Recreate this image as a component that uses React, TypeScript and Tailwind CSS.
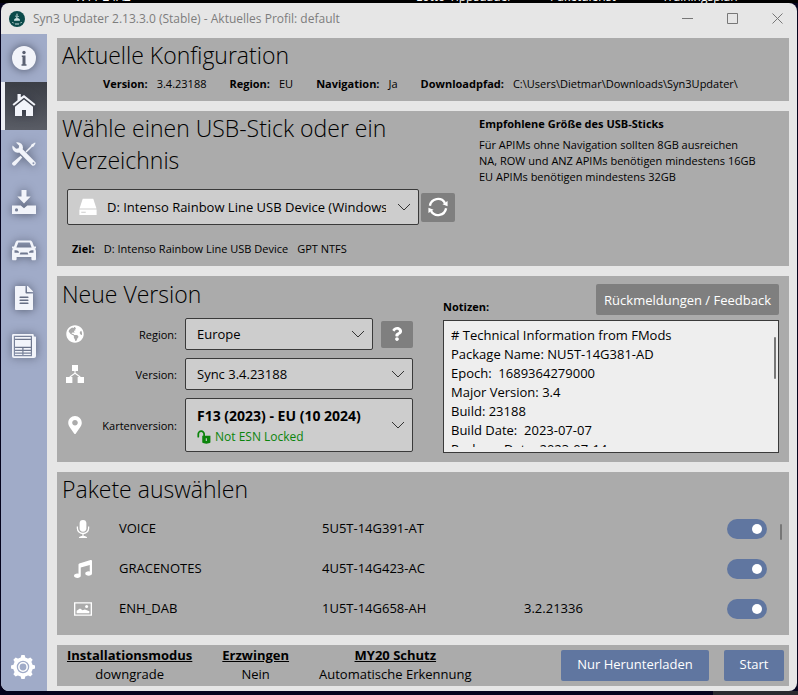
import { useState } from 'react';
import type { ReactNode } from 'react';
import {
  FaFileAlt,
  FaGlobeAmericas,
  FaMapMarkerAlt,
  FaMusic,
  FaQuestion,
} from 'react-icons/fa';

/* ---------- Icons ---------- */
type IconProps = { className?: string };

function Svg({ className, children }: IconProps & { children: ReactNode }) {
  return (
    <svg viewBox="0 0 24 24" fill="currentColor" className={className} aria-hidden="true">
      {children}
    </svg>
  );
}

const LogoIcon = ({ className }: IconProps) => (
  <Svg className={className}>
    <circle cx="12" cy="12" r="12" fill="#0b4a4a" />
    <path d="M12 4v5M9.500 7.500L12 10l2.500-2.500" stroke="#dfeeee" strokeWidth="1.400" fill="none" />
    <path d="M7.500 14.500a4.500 4 0 0 1 9 0z" fill="#cfe3e3" />
    <path d="M5 16.500l2 2M19 16.500l-2 2M9 19.500h6" stroke="#cfe3e3" strokeWidth="1.500" fill="none" />
  </Svg>
);

const InfoIcon = ({ className }: IconProps) => (
  <Svg className={className}>
    <circle cx="12" cy="12" r="12" />
    <g fill="#5b6172">
      <circle cx="12" cy="6.500" r="1.700" />
      <path d="M9.800 9.500h3.700v8.700h1v1.500h-5v-1.500h1V11h-.7z" />
    </g>
  </Svg>
);

const HomeIcon = ({ className }: IconProps) => (
  <Svg className={className}>
    <path d="M5.500 0h3.300v3.200L12 1l11.500 9.300-1.300 1.500L12 3.700 1.800 11.800.5 10.300l5-4z" />
    <path d="M12 5.600l9 7.100V22h-7v-6h-4v6H3v-9.300z" />
  </Svg>
);

const ToolsIcon = ({ className }: IconProps) => (
  <Svg className={className}>
    <path
      fillRule="evenodd"
      d="M4 .5l3.200 3.200-.6 2.500-2.500.6L.6 3.600a5.400 5.400 0 0 0 6.600 6.900L19.600 23a2.300 2.300 0 0 0 3.400-3.300L10.700 7.200A5.400 5.400 0 0 0 4 .5zM21.200 20.300a1 1 0 1 1-.1 1.900 1 1 0 0 1 .1-1.900z"
    />
    <path d="M23 .5l-3.600 2-.7 1.800-5.200 5.200 1 1 5.300-5.200 1.800-.7L23.600 1zM8.600 13.800l1.700 1.600-6.700 7.700a2 2 0 0 1-2.900 0 2 2 0 0 1 .1-2.900z" />
  </Svg>
);

const DownloadIcon = ({ className }: IconProps) => (
  <Svg className={className}>
    <path d="M9.500 0h5v6.500h4.200L12 13.600 5.300 6.500h4.200z" />
    <path
      fillRule="evenodd"
      d="M0 15.500h8.700L12 18.200l3.300-2.700H24V24H0zm4.500 2.800a1.600 1.600 0 1 0 0 3.200 1.600 1.600 0 0 0 0-3.200z"
    />
  </Svg>
);

const CarIcon = ({ className }: IconProps) => (
  <Svg className={className}>
    <path
      fillRule="evenodd"
      d="M6 2.500h12c1.200 0 1.900.5 2.300 1.600L22 8.600h2v2h-1.300c.8.8 1.300 1.700 1.300 3V21c0 .8-.5 1.300-1.300 1.300h-2c-.8 0-1.300-.5-1.300-1.300v-2H4.600v2c0 .8-.5 1.300-1.300 1.300h-2C.5 22.300 0 21.800 0 21v-7.400c0-1.300.5-2.200 1.300-3H0v-2h2l1.700-4.500C4.100 3 4.800 2.500 6 2.500zm.3 2L4.400 9.500h15.200l-1.900-5zM2.500 12.300v2.400H7c0-1.500-1.200-2.400-3-2.400zm19 0H20c-1.800 0-3 .9-3 2.400h4.500zM8.500 14.600l-.8 2h8.600l-.8-2z"
    />
  </Svg>
);

const NewsIcon = ({ className }: IconProps) => (
  <Svg className={className}>
    <path
      fillRule="evenodd"
      d="M1.500 0h19c.8 0 1.300.5 1.300 1.300V2.500H23c.6 0 1 .4 1 1V22c0 1.200-.8 2-2 2H2c-1.200 0-2-.8-2-2V1.500C0 .5.500 0 1.500 0zM1.800 1.800v20.400h18.200V1.800z"
    />
    <path d="M3 3h15.800v1.800H3zM3 6h15.800v6.800H3zM3 14h7.300v1.800H3zM11.500 14h7.300v1.800h-7.300zM3 17h7.300v1.500H3zM11.500 17h7.300v1.500h-7.300zM3 19.700h7.300V21H3zM11.500 19.700h7.300V21h-7.300z" />
  </Svg>
);

const GearIcon = ({ className }: IconProps) => (
  <Svg className={className}>
    {[0, 45, 90, 135].map((angle) => (
      <path
        key={angle}
        d="M10.400 0h3.200l1.200 4v16l-1.200 4h-3.200l-1.200-4V4z"
        transform={`rotate(${angle} 12 12)`}
      />
    ))}
    <circle cx="12" cy="12" r="9.800" />
    <circle cx="12" cy="12" r="5.600" fill="none" stroke="#a0abc8" strokeWidth="1.300" />
    <circle cx="12" cy="12" r="3.400" fill="#a0abc8" />
  </Svg>
);

const DriveIcon = ({ className }: IconProps) => (
  <Svg className={className}>
    <path d="M5 1h14l4.300 13H.7z" />
    <path fillRule="evenodd" d="M.5 15.200h23v7.300H.5zM3 18.400v1.200h6v-1.200z" />
  </Svg>
);

const RefreshIcon = ({ className }: IconProps) => (
  <Svg className={className}>
    <path
      d="M2.300 10.500a9.800 9.800 0 0 1 18-3.500M21.700 13.500a9.800 9.800 0 0 1-18 3.500"
      fill="none"
      stroke="currentColor"
      strokeWidth="2.800"
    />
    <path d="M23.500 4.800v6.400l-6.200-2.400zM.5 19.200v-6.400l6.200 2.400z" />
  </Svg>
);

const SitemapIcon = ({ className }: IconProps) => (
  <Svg className={className}>
    <path d="M8 0h8v8H8zM0 16h8.500v8H0zM15.500 16H24v8h-8.500z" />
    <path d="M12 8v3l-7 5M12 11l7 5" fill="none" stroke="currentColor" strokeWidth="1.500" />
  </Svg>
);

const UnlockIcon = ({ className }: IconProps) => (
  <Svg className={className}>
    <path
      d="M2.200 11.500V7a5 5 0 0 1 10 0v4"
      fill="none"
      stroke="currentColor"
      strokeWidth="3"
      strokeLinecap="round"
    />
    <path fillRule="evenodd" d="M9 10h14v11.500C20 24 12 24 9 21.500zM15 14v5h2v-5z" />
  </Svg>
);

const MicIcon = ({ className }: IconProps) => (
  <Svg className={className}>
    <rect x="7.500" y="0" width="9" height="15.500" rx="4.500" />
    <path
      d="M4.500 8.500v2.500a7.500 7 0 0 0 15 0V8.500M12 18v4"
      fill="none"
      stroke="currentColor"
      strokeWidth="1.700"
    />
    <path d="M6.500 24c0-2.200 2.500-2.800 5.500-2.800s5.500.6 5.500 2.800z" />
  </Svg>
);

const PictureIcon = ({ className }: IconProps) => (
  <Svg className={className}>
    <path fillRule="evenodd" d="M0 3h24v18H0zM1.800 4.800v14.400h20.400V4.800z" />
    <path d="M3.500 17.500v-3.300l4.500-3 3.500 2.500 3-1.200 6 2.500v2.500z" />
    <circle cx="16.800" cy="8.800" r="2" />
  </Svg>
);

const ChevronDown = ({ className }: IconProps) => (
  <svg viewBox="0 0 14 8" fill="none" stroke="#333" className={className} aria-hidden="true">
    <path d="M1 1l6 6 6-6" />
  </svg>
);

/* ---------- Data ---------- */
const navItems = [
  { label: 'Info', Icon: InfoIcon },
  { label: 'Start', Icon: HomeIcon },
  { label: 'Werkzeuge', Icon: ToolsIcon },
  { label: 'Downloads', Icon: DownloadIcon },
  { label: 'Fahrzeug', Icon: CarIcon },
  { label: 'Protokolle', Icon: FaFileAlt },
  { label: 'Neuigkeiten', Icon: NewsIcon },
];

const config = [
  { label: 'Version:', value: '3.4.23188' },
  { label: 'Region:', value: 'EU' },
  { label: 'Navigation:', value: 'Ja' },
  { label: 'Downloadpfad:', value: 'C:\\Users\\Dietmar\\Downloads\\Syn3Updater\\' },
];

const packages = [
  { name: 'VOICE', part: '5U5T-14G391-AT', version: '', Icon: MicIcon },
  { name: 'GRACENOTES', part: '4U5T-14G423-AC', version: '', Icon: FaMusic },
  { name: 'ENH_DAB', part: '1U5T-14G658-AH', version: '3.2.21336', Icon: PictureIcon },
];

const options = [
  { label: 'Installationsmodus', value: 'downgrade' },
  { label: 'Erzwingen', value: 'Nein' },
  { label: 'MY20 Schutz', value: 'Automatische Erkennung' },
];

const notes = `# Technical Information from FMods
Package Name: NU5T-14G381-AD
Epoch:  1689364279000
Major Version: 3.4
Build: 23188
Build Date:  2023-07-07
Package Date: 2023-07-14`;

/* ---------- Building blocks ---------- */
function Panel({ className = '', children }: { className?: string; children: ReactNode }) {
  return <section className={`bg-[#ababab] ${className}`}>{children}</section>;
}

function Title({ children }: { children: ReactNode }) {
  return <h2 className="text-[23px] leading-8 font-light">{children}</h2>;
}

function Combo({ id, value, className = '' }: { id: string; value: string; className?: string }) {
  return (
    <div className="relative min-w-0 flex-1">
      <select
        id={id}
        className={`block w-full appearance-none rounded-xs border border-[#3a3a3a] bg-[#cdcdcd] pr-8 ${className}`}
      >
        <option>{value}</option>
      </select>
      <ChevronDown className="pointer-events-none absolute top-1/2 right-2 h-2 w-3.5 -translate-y-1/2" />
    </div>
  );
}

function Toggle({ name }: { name: string }) {
  const [on, setOn] = useState(true);
  return (
    <input
      type="checkbox"
      role="switch"
      aria-label={name}
      checked={on}
      onChange={() => setOn(!on)}
      className="flex h-5 w-10 appearance-none items-center rounded-full bg-[#8a8a8a] px-[5px] before:size-2.5 before:rounded-full before:bg-white checked:justify-end checked:bg-[#6076a0]"
    />
  );
}

function TitleBar() {
  return (
    <header className="flex h-[31px] items-center pl-2">
      <LogoIcon className="size-4" />
      <h1 className="ml-2 flex-1 text-[12px] text-[#7d7d7d]">
        Syn3 Updater 2.13.3.0 (Stable) - Aktuelles Profil: default
      </h1>
      <div className="flex gap-[5px] text-[#777]">
        {[
          { label: 'Minimieren', d: 'M0 5.500h11' },
          { label: 'Maximieren', d: 'M.5.5h10v10H.5z' },
          { label: 'Schließen', d: 'M.5.5l10 10M10.500.5l-10 10' },
        ].map(({ label, d }) => (
          <button key={label} type="button" aria-label={label} className="flex h-[30px] w-10 items-center justify-center">
            <svg viewBox="0 0 11 11" fill="none" stroke="currentColor" className="size-[11px]">
              <path d={d} />
            </svg>
          </button>
        ))}
      </div>
    </header>
  );
}

function Sidebar() {
  return (
    <nav className="flex w-[46px] flex-col bg-[#a0abc8] text-[#f2f4fa]">
      {navItems.map(({ label, Icon }) => (
        <button
          key={label}
          type="button"
          aria-label={label}
          className={
            label === 'Start'
              ? 'flex h-12 items-center justify-center border-l-4 border-[#eceef4] bg-linear-to-b from-[#3b3e46] to-[#5a5d66] pr-1'
              : 'flex h-12 items-center justify-center'
          }
        >
          <Icon className="size-6 drop-shadow-[0_0_5px_rgba(40,45,60,0.7)]" />
        </button>
      ))}
      <button type="button" aria-label="Einstellungen" className="mt-auto flex h-12 items-center justify-center pr-0.5 text-white">
        <GearIcon className="size-6" />
      </button>
    </nav>
  );
}

function App() {
  const [text, setText] = useState(notes);

  return (
    <div className="flex h-screen min-h-[695px] flex-col overflow-hidden bg-[#05031d] font-['Open_Sans','Segoe_UI',sans-serif] text-[11px] text-black">
      {/* Desktop behind the window */}
      <div className="flex h-[3px] items-end overflow-hidden bg-black pl-[75px] text-[12px] leading-3 whitespace-nowrap text-white">
        <span className="w-[341px]">WTT 24AZ</span>
        <span className="w-[134px]">Lotto-Tippsdauer</span>
        <span className="w-28">Paketdienst</span>
        <span>Trainingsplan</span>
      </div>

      <div className="mx-px flex flex-1 flex-col overflow-hidden rounded-lg bg-[#e6e6e6]">
        <TitleBar />
        <div className="flex flex-1">
          <Sidebar />

          <main className="flex min-w-0 flex-1 flex-col gap-2.5 pt-1 pr-2 pb-[5px] pl-2.5">
            <Panel className="px-[5px] pt-px pb-2">
              <Title>Aktuelle Konfiguration</Title>
              <dl className="flex gap-[23px] pt-1 pl-[41px] leading-[18px] whitespace-nowrap">
                {config.map(({ label, value }) => (
                  <div key={label} className="flex gap-[9px]">
                    <dt className="font-bold">{label}</dt>
                    <dd>{value}</dd>
                  </div>
                ))}
              </dl>
            </Panel>

            <Panel className="flex px-[5px] pt-px pb-2">
              <div className="w-[417px]">
                <Title>Wähle einen USB-Stick oder ein Verzeichnis</Title>
                <div className="mt-[13px] ml-[5px] flex items-center gap-0.5">
                  <div className="relative flex w-[352px]">
                    <Combo id="drive" value="D: Intenso Rainbow Line USB Device (Windows)" className="h-9 pt-0.5 pl-[39px] text-[13px]" />
                    <DriveIcon className="pointer-events-none absolute top-[9px] left-3 size-[18px] text-white" />
                  </div>
                  <button
                    type="button"
                    aria-label="Aktualisieren"
                    className="flex h-[29px] w-[34px] items-center justify-center rounded-xs bg-[#7f7f7f] text-white"
                  >
                    <RefreshIcon className="size-5" />
                  </button>
                </div>
                <p className="mt-[15px] ml-2.5 flex gap-[9px] leading-[18px]">
                  <label htmlFor="drive" className="font-bold">Ziel:</label>
                  <span>D: Intenso Rainbow Line USB Device</span>
                  <span>GPT NTFS</span>
                </p>
              </div>
              <div className="flex-1 pt-1 leading-4">
                <h3 className="mb-[5px] font-bold">Empfohlene Größe des USB-Sticks</h3>
                <p>Für APIMs ohne Navigation sollten 8GB ausreichen</p>
                <p>NA, ROW und ANZ APIMs benötigen mindestens 16GB</p>
                <p>EU APIMs benötigen mindestens 32GB</p>
              </div>
            </Panel>

            <Panel className="flex gap-[30px] pt-0.5 pr-2.5 pb-[9px] pl-[5px]">
              <div className="w-[351px]">
                <Title>Neue Version</Title>
                <div className="mt-2 grid grid-cols-[29px_82px_1fr] items-center gap-y-2 pl-1">
                  <FaGlobeAmericas className="size-[18px] text-white" />
                  <label htmlFor="region" className="pt-0.5 text-right">Region:</label>
                  <div className="flex items-center gap-2 pl-2">
                    <Combo id="region" value="Europe" className="h-8 pt-0.5 pl-[11px] text-[13px]" />
                    <button
                      type="button"
                      aria-label="Hilfe zur Region"
                      className="flex h-[27px] w-8 items-center justify-center rounded-xs bg-[#7f7f7f] text-white"
                    >
                      <FaQuestion className="size-3.5" />
                    </button>
                  </div>

                  <SitemapIcon className="size-[18px] text-white" />
                  <label htmlFor="version" className="pt-0.5 text-right">Version:</label>
                  <div className="flex pl-2">
                    <Combo id="version" value="Sync 3.4.23188" className="h-8 pt-0.5 pl-[11px] text-[13px]" />
                  </div>

                  <FaMapMarkerAlt className="size-[18px] text-white" />
                  <label htmlFor="maps" className="pt-0.5 text-right">Kartenversion:</label>
                  <div className="relative flex pl-2">
                    <Combo id="maps" value="F13 (2023) - EU (10 2024)" className="h-[54px] pb-5 pl-[11px] text-[14px] font-bold" />
                    <p className="pointer-events-none absolute bottom-1.5 left-5 flex items-center gap-1 text-[12px] leading-[18px] text-[#0b840b]">
                      <UnlockIcon className="size-3.5" />
                      Not ESN Locked
                    </p>
                  </div>
                </div>
              </div>

              <div className="flex min-w-0 flex-1 flex-col">
                <div className="flex items-end justify-between pt-1.5">
                  <label htmlFor="notes" className="leading-4 font-bold">Notizen:</label>
                  <button type="button" className="h-[31px] rounded-xs bg-[#7f7f7f] px-2 pt-0.5 text-[13px] whitespace-nowrap text-white">
                    Rückmeldungen / Feedback
                  </button>
                </div>
                <div className="relative mt-[5px] flex h-[133px] border border-[#3a3a3a] bg-[#eee] px-[7px] py-[5px]">
                  <textarea
                    id="notes"
                    value={text}
                    onChange={(e) => setText(e.target.value)}
                    className="block w-full resize-none [scrollbar-width:none] text-[13px] leading-[19px] outline-none"
                  />
                  <span className="absolute top-4 right-0.5 h-[42px] w-0.5 rounded-full bg-[#777]" />
                </div>
              </div>
            </Panel>

            <Panel className="relative flex-1 pt-px pl-[5px]">
              <Title>Pakete auswählen</Title>
              <table className="mt-1 w-full table-fixed text-[13px]">
                <tbody>
                  {packages.map(({ name, part, version, Icon }) => (
                    <tr key={name} className="h-10">
                      <td className="w-[57px] pl-3">
                        <Icon className="size-[18px] text-white" />
                      </td>
                      <td className="w-[203px]">{name}</td>
                      <td className="w-[202px]">{part}</td>
                      <td>{version}</td>
                      <td className="w-[62px]">
                        <Toggle name={name} />
                      </td>
                    </tr>
                  ))}
                </tbody>
              </table>
              <span className="absolute top-[52px] right-[7px] h-4 w-0.5 rounded-full bg-[#777]" />
            </Panel>

            <Panel className="flex items-center justify-between pt-px pr-[5px] pb-0.5 pl-2.5">
              <dl className="flex text-center text-[13px] leading-[19px] whitespace-nowrap">
                {options.map(({ label, value }) => (
                  <div key={label} className="mr-[30px]">
                    <dt className="font-bold underline">{label}</dt>
                    <dd>{value}</dd>
                  </div>
                ))}
              </dl>
              <div className="flex gap-[15px] text-[13px] whitespace-nowrap text-white">
                <button type="button" className="h-[31px] w-[148px] rounded-xs bg-[#6076a0]">
                  Nur Herunterladen
                </button>
                <button type="button" className="h-[31px] w-[60px] rounded-xs bg-[#6076a0]">
                  Start
                </button>
              </div>
            </Panel>
          </main>
        </div>
      </div>

      <div className="flex h-1 justify-end">
        <div className="w-[85px] bg-[#2b2b30]" />
      </div>
    </div>
  );
}

export default App;
